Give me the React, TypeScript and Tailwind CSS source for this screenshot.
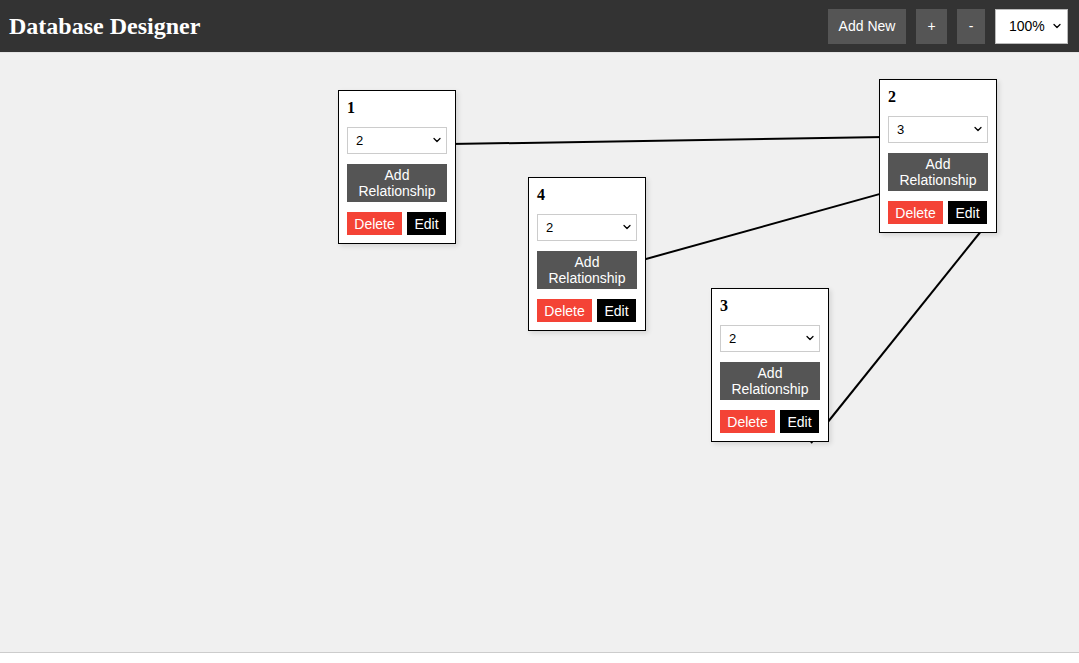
import { ChevronDown } from 'lucide-react';

type Node = { id: number; left: number; top: number; target: string };

const nodes: Node[] = [
  { id: 1, left: 338, top: 37, target: "2" },
  { id: 4, left: 528, top: 124, target: "2" },
  { id: 3, left: 711, top: 235, target: "2" },
  { id: 2, left: 879, top: 26, target: "3" },
];

// line endpoints in canvas coordinates, ends sit under the nodes
const links = [
  { x1: 420, y1: 91.6, x2: 900, y2: 83.7 },
  { x1: 620, y1: 213.2, x2: 900, y2: 135.4 },
  { x1: 990, y1: 167, x2: 811, y2: 390 },
];

function TableNode({ node }: { node: Node }) {
  return (
    <div
      className="absolute w-[118px] bg-white border border-black p-2 shadow-[2px_2px_5px_rgba(0,0,0,0.12)]"
      style={{ left: node.left, top: node.top }}
    >
      <div className="font-['Liberation_Serif',serif] font-bold text-[16px] leading-[18px] mb-[10px]">
        {node.id}
      </div>
      <div className="relative w-[100px] h-[27px] mb-[10px]">
        <select
          defaultValue={node.target}
          className="appearance-none w-full h-full border border-[#ccc] bg-white pl-2 text-[13px] text-black font-['Liberation_Sans',Arial,sans-serif] outline-none"
        >
          <option value="1">1</option>
          <option value="2">2</option>
          <option value="3">3</option>
          <option value="4">4</option>
        </select>
        <ChevronDown className="absolute right-[4px] top-[7px] w-[12px] h-[12px] pointer-events-none" strokeWidth={2.5} />
      </div>
      <button className="block w-[100px] h-[38px] bg-[#555] text-white text-[14px] leading-[16px] font-['Liberation_Sans',Arial,sans-serif] mb-[10px]">
        Add
        <br />
        Relationship
      </button>
      <div className="flex gap-[5px]">
        <button className="h-[23px] w-[55px] bg-[#f44336] text-white text-[14px] leading-[16px] font-['Liberation_Sans',Arial,sans-serif]">
          Delete
        </button>
        <button className="h-[23px] w-[39px] bg-black text-white text-[14px] leading-[16px] font-['Liberation_Sans',Arial,sans-serif]">
          Edit
        </button>
      </div>
    </div>
  );
}

export default function App() {
  return (
    <div className="w-[1079px] min-h-[663px] bg-white">
      <header className="h-[52px] bg-[#333] flex items-center justify-between pl-[9px] pr-[11px]">
        <h1 className="text-white font-bold text-[24px] font-['Liberation_Serif',serif] leading-none">
          Database Designer
        </h1>
        <div className="flex items-center gap-[10px] font-['Liberation_Sans',Arial,sans-serif] text-[14px]">
          <button className="h-[35px] w-[78px] bg-[#555] text-white">Add New</button>
          <button className="h-[35px] w-[31px] bg-[#555] text-white">+</button>
          <button className="h-[35px] w-[28px] bg-[#555] text-white">-</button>
          <div className="relative w-[73px] h-[35px]">
            <select
              defaultValue="100"
              className="appearance-none w-full h-full bg-white border border-[#bbb] pl-[13px] text-[14px] text-black outline-none"
            >
              <option value="50">50%</option>
              <option value="100">100%</option>
              <option value="150">150%</option>
            </select>
            <ChevronDown className="absolute right-[5px] top-[11px] w-[12px] h-[12px] pointer-events-none" strokeWidth={2.5} />
          </div>
        </div>
      </header>
      <main className="relative h-[601px] bg-[#f0f0f0] border-t border-[#e4e4e4] border-b border-b-[#ccc] overflow-hidden">
        <svg className="absolute inset-0 w-full h-full" width="1079" height="600">
          {links.map((l, i) => (
            <line key={i} x1={l.x1} y1={l.y1} x2={l.x2} y2={l.y2} stroke="black" strokeWidth={2} />
          ))}
        </svg>
        {nodes.map((n) => (
          <TableNode key={n.id} node={n} />
        ))}
      </main>
    </div>
  );
}
